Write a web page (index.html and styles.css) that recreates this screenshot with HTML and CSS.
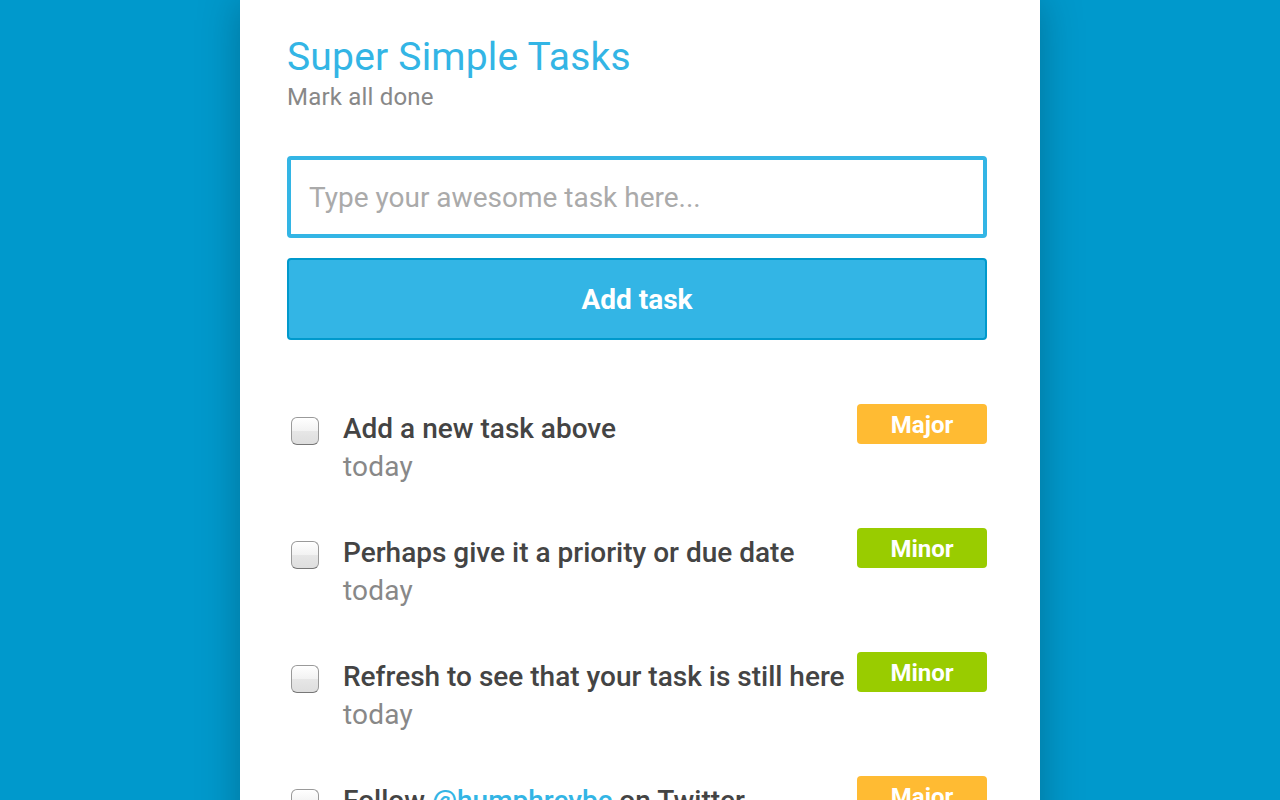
FILE: index.html
```html
<!DOCTYPE html>
<html>
<head>
<meta charset="utf-8">
<link rel="stylesheet" href="styles.css">
</head>
<body>
<div class="card">
  <h1 class="title">Super Simple Tasks</h1>
  <a class="mark-all">Mark all done</a>
  <form class="new-task">
    <input class="task-input" type="text" placeholder="Type your awesome task here...">
    <button class="add-btn" type="button">Add task</button>
  </form>
  <ul class="tasks">
    <li class="task">
      <span class="check"></span>
      <div class="task-body">
        <div class="task-name">Add a new task above</div>
        <div class="task-date">today</div>
      </div>
      <span class="badge major">Major</span>
    </li>
    <li class="task">
      <span class="check"></span>
      <div class="task-body">
        <div class="task-name">Perhaps give it a priority or due date</div>
        <div class="task-date">today</div>
      </div>
      <span class="badge minor">Minor</span>
    </li>
    <li class="task">
      <span class="check"></span>
      <div class="task-body">
        <div class="task-name">Refresh to see that your task is still here</div>
        <div class="task-date">today</div>
      </div>
      <span class="badge minor">Minor</span>
    </li>
    <li class="task">
      <span class="check"></span>
      <div class="task-body">
        <div class="task-name">Follow <a class="link">@humphreybc</a> on Twitter</div>
        <div class="task-date">today</div>
      </div>
      <span class="badge major">Major</span>
    </li>
  </ul>
</div>
</body>
</html>
```

FILE: styles.css
```css
html, body {
  margin: 0;
  padding: 0;
  height: 100%;
  overflow: hidden;
}
body {
  background: #0099cc;
  font-family: Roboto, "Noto Sans", sans-serif;
}
.card {
  width: 800px;
  margin: 0 auto;
  min-height: 100%;
  background: #fff;
  box-shadow: 0 0 40px rgba(0, 0, 0, 0.25);
  padding: 32px 53px 0 47px;
  box-sizing: border-box;
}
.title {
  margin: 0;
  font-size: 39px;
  font-weight: 400;
  color: #33b5e5;
  line-height: 50px;
  letter-spacing: 0.2px;
}
.mark-all {
  display: block;
  font-size: 24px;
  color: #888;
  line-height: 30px;
  letter-spacing: 0.2px;
}
.new-task {
  margin-top: 44px;
  display: flex;
  flex-direction: column;
  gap: 20px;
}
.task-input {
  height: 82px;
  box-sizing: border-box;
  border: 4px solid #33b5e5;
  border-radius: 4px;
  padding: 0 18px;
  font-family: Roboto, sans-serif;
  font-size: 28px;
  outline: none;
  color: #444;
}
.task-input::placeholder {
  color: #aaa;
}
.add-btn {
  height: 82px;
  box-sizing: border-box;
  background: #33b5e5;
  border: 2px solid #0099cc;
  border-radius: 4px;
  color: #fff;
  font-family: Roboto, sans-serif;
  font-weight: 700;
  font-size: 28px;
  padding-top: 2px;
}
.tasks {
  list-style: none;
  margin: 64px 0 0;
  padding: 0;
}
.task {
  display: flex;
  align-items: flex-start;
  height: 124px;
}
.check {
  flex: none;
  width: 26px;
  height: 26px;
  margin: 13px 24px 0 4px;
  border: 1px solid #9a9a9a;
  border-bottom-color: #777;
  border-radius: 6px;
  background: linear-gradient(#ffffff 0%, #f2f2f2 50%, #e6e6e6 52%, #dedede 100%);
  box-shadow: inset 0 1px 0 #fff;
}
.task-body {
  flex: 1;
  padding-top: 7px;
}
.task-name {
  font-size: 28px;
  font-weight: 500;
  color: #444;
  line-height: 36px;
}
.task-date {
  font-size: 28px;
  color: #888;
  line-height: 40px;
  letter-spacing: 0.2px;
}
.link {
  color: #33b5e5;
}
.badge {
  flex: none;
  width: 130px;
  height: 40px;
  border-radius: 4px;
  color: #fff;
  font-weight: 700;
  font-size: 24px;
  line-height: 42px;
  text-align: center;
}
.major { background: #ffbb33; }
.minor { background: #99cc00; }
```
